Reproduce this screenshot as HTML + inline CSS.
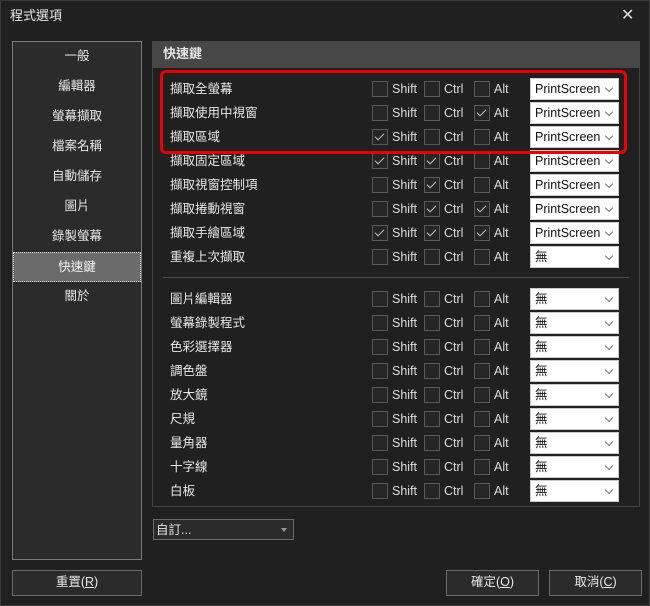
<!DOCTYPE html>
<html><head><meta charset="utf-8"><style>
*{box-sizing:border-box;margin:0;padding:0}
body{width:650px;height:606px;background:#202020;font-family:"Liberation Sans","Noto Sans CJK TC",sans-serif;color:#e8e8e8;font-size:12.5px;line-height:16px;position:relative;overflow:hidden;border:1px solid #3a3a3a}
.a{position:absolute}
.title{left:9px;top:7px;font-size:13px}
.close{left:620px;top:7px;font-size:16px;color:#ddd}
.left{left:11px;top:40px;width:130px;height:519px;border:1px solid #7a7a7a;background:#2b2b2b}
.li{position:absolute;left:0;width:128px;height:30px;line-height:28px;text-align:center}
.sel{background:#6b6b6b;border:1px dotted #ddd;color:#f4f4f4}
.hdr{left:151px;top:40px;width:488px;height:27px;background:#474747;font-weight:bold;padding:5px 0 0 11px;font-size:13px}
.box{left:151px;top:67px;width:488px;height:439px;border:1px solid #444;border-top:none}
.row{position:absolute;left:169px;height:22px;width:460px}
.row .n{position:absolute;left:0;top:3px}
.cb{position:absolute;top:3px;width:16px;height:16px;border:1px solid #5a5a5a;background:#262626}
.cb.c::after{content:"";position:absolute;left:4px;top:1px;width:4px;height:8px;border:solid #bbb;border-width:0 1.5px 1.5px 0;transform:rotate(45deg)}
.lb{position:absolute;top:3px;color:#ddd}
.dd{position:absolute;left:360px;top:0;width:89px;height:22px;background:#fff;color:#111;padding:2px 0 0 4px;border:1px solid #ccc;line-height:16px}
.dd::after{content:"";position:absolute;right:6px;top:6px;width:5px;height:5px;border:solid #777;border-width:0 1px 1px 0;transform:rotate(45deg)}
.sep{left:162px;top:276px;width:466px;height:1px;background:#4a4a4a}
.red{left:159px;top:69px;width:467px;height:84px;border:3px solid #e00;border-radius:6px}
.combo{left:152px;top:518px;width:141px;height:21px;border:1px solid #6a6a6a;background:#2b2b2b;padding:1px 0 0 2px;line-height:18px}
.combo::after{content:"";position:absolute;right:6px;top:8px;border:3px solid transparent;border-top:4px solid #999}
.btn{height:26px;border:1px solid #6a6a6a;background:#2b2b2b;text-align:center;line-height:23px}
</style></head><body>
<div class="a title">程式選項</div>
<div class="a close">✕</div>
<div class="a left">
<div class="li" style="top:0">一般</div>
<div class="li" style="top:30px">編輯器</div>
<div class="li" style="top:60px">螢幕擷取</div>
<div class="li" style="top:90px">檔案名稱</div>
<div class="li" style="top:120px">自動儲存</div>
<div class="li" style="top:150px">圖片</div>
<div class="li" style="top:180px">錄製螢幕</div>
<div class="li sel" style="top:210px;left:0">快速鍵</div>
<div class="li" style="top:240px">關於</div>
</div>
<div class="a hdr">快速鍵</div>
<div class="a box"></div>

<div class="row" style="top:77px"><span class="n">擷取全螢幕</span><i class="cb" style="left:202px"></i><span class="lb" style="left:222px">Shift</span><i class="cb" style="left:254px"></i><span class="lb" style="left:274px">Ctrl</span><i class="cb" style="left:304px"></i><span class="lb" style="left:324px">Alt</span><div class="dd">PrintScreen</div></div>
<div class="row" style="top:101px"><span class="n">擷取使用中視窗</span><i class="cb" style="left:202px"></i><span class="lb" style="left:222px">Shift</span><i class="cb" style="left:254px"></i><span class="lb" style="left:274px">Ctrl</span><i class="cb c" style="left:304px"></i><span class="lb" style="left:324px">Alt</span><div class="dd">PrintScreen</div></div>
<div class="row" style="top:125px"><span class="n">擷取區域</span><i class="cb c" style="left:202px"></i><span class="lb" style="left:222px">Shift</span><i class="cb" style="left:254px"></i><span class="lb" style="left:274px">Ctrl</span><i class="cb" style="left:304px"></i><span class="lb" style="left:324px">Alt</span><div class="dd">PrintScreen</div></div>
<div class="row" style="top:149px"><span class="n">擷取固定區域</span><i class="cb c" style="left:202px"></i><span class="lb" style="left:222px">Shift</span><i class="cb c" style="left:254px"></i><span class="lb" style="left:274px">Ctrl</span><i class="cb" style="left:304px"></i><span class="lb" style="left:324px">Alt</span><div class="dd">PrintScreen</div></div>
<div class="row" style="top:173px"><span class="n">擷取視窗控制項</span><i class="cb" style="left:202px"></i><span class="lb" style="left:222px">Shift</span><i class="cb c" style="left:254px"></i><span class="lb" style="left:274px">Ctrl</span><i class="cb" style="left:304px"></i><span class="lb" style="left:324px">Alt</span><div class="dd">PrintScreen</div></div>
<div class="row" style="top:197px"><span class="n">擷取捲動視窗</span><i class="cb" style="left:202px"></i><span class="lb" style="left:222px">Shift</span><i class="cb c" style="left:254px"></i><span class="lb" style="left:274px">Ctrl</span><i class="cb c" style="left:304px"></i><span class="lb" style="left:324px">Alt</span><div class="dd">PrintScreen</div></div>
<div class="row" style="top:221px"><span class="n">擷取手繪區域</span><i class="cb c" style="left:202px"></i><span class="lb" style="left:222px">Shift</span><i class="cb c" style="left:254px"></i><span class="lb" style="left:274px">Ctrl</span><i class="cb c" style="left:304px"></i><span class="lb" style="left:324px">Alt</span><div class="dd">PrintScreen</div></div>
<div class="row" style="top:245px"><span class="n">重複上次擷取</span><i class="cb" style="left:202px"></i><span class="lb" style="left:222px">Shift</span><i class="cb" style="left:254px"></i><span class="lb" style="left:274px">Ctrl</span><i class="cb" style="left:304px"></i><span class="lb" style="left:324px">Alt</span><div class="dd">無</div></div>
<div class="a sep"></div>
<div class="row" style="top:287px"><span class="n">圖片編輯器</span><i class="cb" style="left:202px"></i><span class="lb" style="left:222px">Shift</span><i class="cb" style="left:254px"></i><span class="lb" style="left:274px">Ctrl</span><i class="cb" style="left:304px"></i><span class="lb" style="left:324px">Alt</span><div class="dd">無</div></div>
<div class="row" style="top:311px"><span class="n">螢幕錄製程式</span><i class="cb" style="left:202px"></i><span class="lb" style="left:222px">Shift</span><i class="cb" style="left:254px"></i><span class="lb" style="left:274px">Ctrl</span><i class="cb" style="left:304px"></i><span class="lb" style="left:324px">Alt</span><div class="dd">無</div></div>
<div class="row" style="top:335px"><span class="n">色彩選擇器</span><i class="cb" style="left:202px"></i><span class="lb" style="left:222px">Shift</span><i class="cb" style="left:254px"></i><span class="lb" style="left:274px">Ctrl</span><i class="cb" style="left:304px"></i><span class="lb" style="left:324px">Alt</span><div class="dd">無</div></div>
<div class="row" style="top:359px"><span class="n">調色盤</span><i class="cb" style="left:202px"></i><span class="lb" style="left:222px">Shift</span><i class="cb" style="left:254px"></i><span class="lb" style="left:274px">Ctrl</span><i class="cb" style="left:304px"></i><span class="lb" style="left:324px">Alt</span><div class="dd">無</div></div>
<div class="row" style="top:383px"><span class="n">放大鏡</span><i class="cb" style="left:202px"></i><span class="lb" style="left:222px">Shift</span><i class="cb" style="left:254px"></i><span class="lb" style="left:274px">Ctrl</span><i class="cb" style="left:304px"></i><span class="lb" style="left:324px">Alt</span><div class="dd">無</div></div>
<div class="row" style="top:407px"><span class="n">尺規</span><i class="cb" style="left:202px"></i><span class="lb" style="left:222px">Shift</span><i class="cb" style="left:254px"></i><span class="lb" style="left:274px">Ctrl</span><i class="cb" style="left:304px"></i><span class="lb" style="left:324px">Alt</span><div class="dd">無</div></div>
<div class="row" style="top:431px"><span class="n">量角器</span><i class="cb" style="left:202px"></i><span class="lb" style="left:222px">Shift</span><i class="cb" style="left:254px"></i><span class="lb" style="left:274px">Ctrl</span><i class="cb" style="left:304px"></i><span class="lb" style="left:324px">Alt</span><div class="dd">無</div></div>
<div class="row" style="top:455px"><span class="n">十字線</span><i class="cb" style="left:202px"></i><span class="lb" style="left:222px">Shift</span><i class="cb" style="left:254px"></i><span class="lb" style="left:274px">Ctrl</span><i class="cb" style="left:304px"></i><span class="lb" style="left:324px">Alt</span><div class="dd">無</div></div>
<div class="row" style="top:479px"><span class="n">白板</span><i class="cb" style="left:202px"></i><span class="lb" style="left:222px">Shift</span><i class="cb" style="left:254px"></i><span class="lb" style="left:274px">Ctrl</span><i class="cb" style="left:304px"></i><span class="lb" style="left:324px">Alt</span><div class="dd">無</div></div>

<div class="a red"></div>
<div class="a combo">自訂...</div>
<div class="a btn" style="left:11px;top:569px;width:130px">重置(<u>R</u>)</div>
<div class="a btn" style="left:445px;top:569px;width:93px">確定(<u>O</u>)</div>
<div class="a btn" style="left:548px;top:569px;width:93px">取消(<u>C</u>)</div>
</body></html>
